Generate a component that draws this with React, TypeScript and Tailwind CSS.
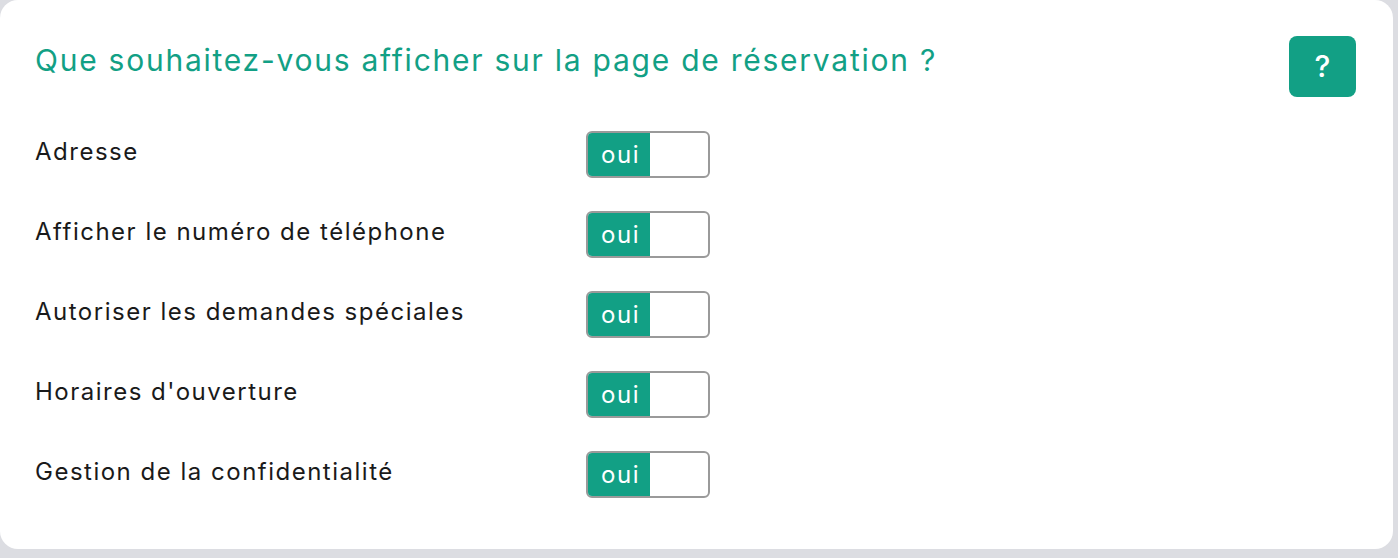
const rows = [
  "Adresse",
  "Afficher le numéro de téléphone",
  "Autoriser les demandes spéciales",
  "Horaires d'ouverture",
  "Gestion de la confidentialité",
]

function Toggle() {
  return (
    <div className="flex h-[47px] w-[124px] overflow-hidden rounded-[6px] border-2 border-[#9a9a9a] bg-white">
      <div className="flex w-[62px] items-center justify-center bg-[#12a085] pl-[3px] text-[24px] tracking-[1.5px] text-white">
        oui
      </div>
    </div>
  )
}

export default function App() {
  return (
    <div className="h-[558px] w-[1398px] bg-[#dcdde2] pr-[5px] pb-[9px] font-['Inter',sans-serif]">
      <div className="h-full rounded-[18px] bg-white pl-[35px] pr-[37px] pt-[36px]">
        <div className="flex items-start justify-between">
          <h1 className="mt-[3px] text-[30px] leading-[42px] tracking-[1.75px] text-[#12a085]">
            Que souhaitez-vous afficher sur la page de réservation ?
          </h1>
          <button className="flex h-[61px] w-[67px] items-center justify-center rounded-[8px] bg-[#12a085] text-[30px] font-medium text-white">
            ?
          </button>
        </div>
        <div className="mt-[34px] flex flex-col gap-[33px]">
          {rows.map((label) => (
            <div key={label} className="flex items-center">
              <span className="w-[551px] pb-[5px] text-[24px] tracking-[1.5px] text-[#1a1a1a]">{label}</span>
              <Toggle />
            </div>
          ))}
        </div>
      </div>
    </div>
  )
}
